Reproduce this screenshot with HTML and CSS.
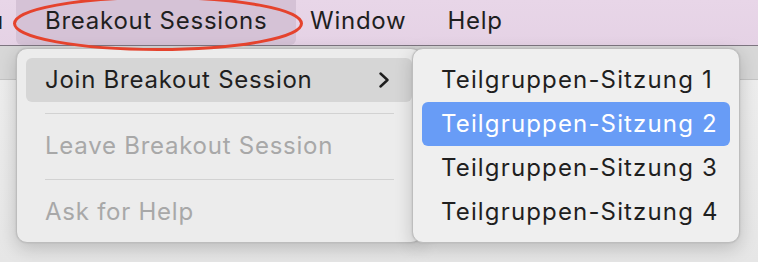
FILE: index.html
```html
<!DOCTYPE html>
<html>
<head>
<meta charset="utf-8">
<link rel="stylesheet" href="styles.css">
</head>
<body>
<div class="screen">
  <div class="menubar">
    <span class="mb-item mb-cut">u</span>
    <span class="mb-item mb-active">Breakout Sessions</span>
    <span class="mb-item mb-window">Window</span>
    <span class="mb-item mb-help">Help</span>
  </div>
  <div class="desk">
    <div class="titlestrip"></div>
    <div class="content"></div>
  </div>

  <div class="menu main-menu">
    <div class="row row-hover">
      <span>Join Breakout Session</span>
      <svg class="chev" width="12" height="16" viewBox="0 0 12 16"><path d="M2.5 1.5 L9.5 8 L2.5 14.5" fill="none" stroke="#1e1e1e" stroke-width="2.4" stroke-linecap="round" stroke-linejoin="round"/></svg>
    </div>
    <div class="sep"></div>
    <div class="row row-disabled"><span>Leave Breakout Session</span></div>
    <div class="sep"></div>
    <div class="row row-disabled"><span>Ask for Help</span></div>
  </div>

  <div class="menu sub-menu">
    <div class="row"><span>Teilgruppen-Sitzung 1</span></div>
    <div class="row row-selected"><span>Teilgruppen-Sitzung 2</span></div>
    <div class="row"><span>Teilgruppen-Sitzung 3</span></div>
    <div class="row"><span>Teilgruppen-Sitzung 4</span></div>
  </div>

  <svg class="annot" width="758" height="60" viewBox="0 0 758 60">
    <ellipse cx="158" cy="23.5" rx="143.5" ry="26" fill="none" stroke="#e5432d" stroke-width="3"/>
  </svg>
</div>
</body>
</html>
```

FILE: styles.css
```css
* { box-sizing: border-box; }
html, body { margin: 0; padding: 0; }
body {
  width: 758px;
  height: 262px;
  overflow: hidden;
  font-family: Inter, "Noto Sans", "Liberation Sans", sans-serif;
  color: #1f1f1f;
}
.screen {
  position: relative;
  width: 758px;
  height: 262px;
  display: flex;
  flex-direction: column;
  background: #ebebeb;
}
.menubar {
  height: 46px;
  flex: none;
  display: flex;
  align-items: stretch;
  background: linear-gradient(#e8d6e8, #e5d2e5);
  border-bottom: 1px solid #7d7580;
  font-size: 24px;
  letter-spacing: 0.75px;
}
.mb-item {
  display: flex;
  align-items: center;
  padding-bottom: 4px;
}
.mb-cut {
  margin-left: -11px;
  width: 27px;
}
.mb-active {
  width: 280px;
  padding-left: 29px;
  background: #d5c2d6;
  border-radius: 0 0 6px 6px;
}
.mb-window { margin-left: 14px; }
.mb-help { margin-left: 41px; }
.desk {
  flex: 1;
  display: flex;
  flex-direction: column;
}
.titlestrip {
  height: 34px;
  background: #d7d7d7;
  border-bottom: 1px solid #c4c4c4;
}
.content {
  flex: 1;
  background: linear-gradient(#ededed, #e6e6e6);
}
.menu {
  position: absolute;
  top: 48px;
  height: 195px;
  background: #ececec;
  border-radius: 11px;
  border: 1px solid #bdbdbd;
  box-shadow: 0 6px 18px rgba(0,0,0,0.18), 0 0 2px rgba(0,0,0,0.12);
  padding: 9px 9px;
  font-size: 24px;
  letter-spacing: 0.75px;
}
.main-menu {
  left: 16px;
  width: 406px;
}
.sub-menu {
  left: 412px;
  width: 328px;
  background: #efefef;
  letter-spacing: 1.15px;
}
.row {
  height: 44px;
  display: flex;
  align-items: center;
  justify-content: space-between;
  padding: 0 22px 1px 19px;
  border-radius: 6px;
  white-space: nowrap;
}
.row-hover { background: #d6d6d6; }
.row-disabled { color: #a8a8a8; }
.row-selected { background: #689cf6; color: #ffffff; }
.chev { margin-top: 1px; }
.sep {
  height: 22px;
  display: flex;
  align-items: center;
  margin: 0 18px 0 19px;
  position: relative;
}
.sep::before {
  content: "";
  flex: 1;
  height: 1px;
  background: #d2d2d2;
}
.annot {
  position: absolute;
  left: 0;
  top: 0;
  pointer-events: none;
}
```
